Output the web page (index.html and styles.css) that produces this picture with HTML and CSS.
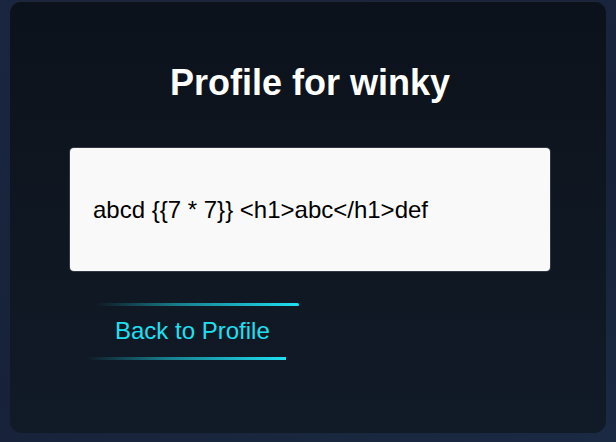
FILE: index.html
```html
<!DOCTYPE html>
<html lang="en">
<head>
<meta charset="utf-8">
<title>Profile for winky</title>
<link rel="stylesheet" href="styles.css">
</head>
<body>
<div class="page">
  <main class="card">
    <h1 class="title">Profile for winky</h1>
    <div class="bio">
      <p class="bio-text">abcd {{7 * 7}} &lt;h1&gt;abc&lt;/h1&gt;def</p>
    </div>
    <a class="back-link" href="#">Back to Profile</a>
  </main>
</div>
</body>
</html>
```
FILE: styles.css
```css
html, body {
  margin: 0;
  padding: 0;
  height: 100%;
}
body {
  background: linear-gradient(160deg, #1a2640 0%, #17223a 60%, #1a2a42 100%);
  font-family: "Liberation Sans", Arial, sans-serif;
  overflow: hidden;
}
.page {
  padding: 1px 10px 9px 10px;
}
.card {
  box-sizing: border-box;
  width: 596px;
  height: 432px;
  border-radius: 12px;
  background: linear-gradient(180deg, #0c121b 0%, #0f1722 55%, #111a27 100%);
  border-top: 1px solid rgba(255, 255, 255, 0.06);
  padding: 34px 56px 0 60px;
  display: flex;
  flex-direction: column;
  align-items: flex-start;
}
.title {
  align-self: stretch;
  margin: 26px 0 0 0;
  padding-left: 0;
  font-size: 36px;
  font-weight: 700;
  color: #ffffff;
  text-align: center;
  line-height: 41px;
}
.bio {
  box-sizing: border-box;
  width: 480px;
  margin-top: 45px;
  padding: 24px 24px 24px 23px;
  background: #f9f9f9;
  border-radius: 4px;
  box-shadow: 0 0 0 1px rgba(255, 255, 255, 0.15);
}
.bio-text {
  margin: 24px 0;
  font-size: 24px;
  line-height: 27px;
  color: #000000;
}
.back-link {
  position: relative;
  display: inline-block;
  margin: 32px 0 0 21px;
  padding: 14px 24px 15px 24px;
  font-size: 24px;
  line-height: 28px;
  color: #1fe0f2;
  text-decoration: none;
}
.back-link::before,
.back-link::after {
  content: "";
  position: absolute;
  height: 3px;
  background: linear-gradient(90deg, rgba(31, 224, 242, 0) 0%, rgba(31, 224, 242, 0.5) 40%, #1fe0f2 100%);
}
.back-link::before {
  top: 0;
  left: 5px;
  right: -5px;
  border-radius: 0 3px 2px 0;
}
.back-link::after {
  bottom: 0;
  left: -5px;
  right: 8px;
}
```
